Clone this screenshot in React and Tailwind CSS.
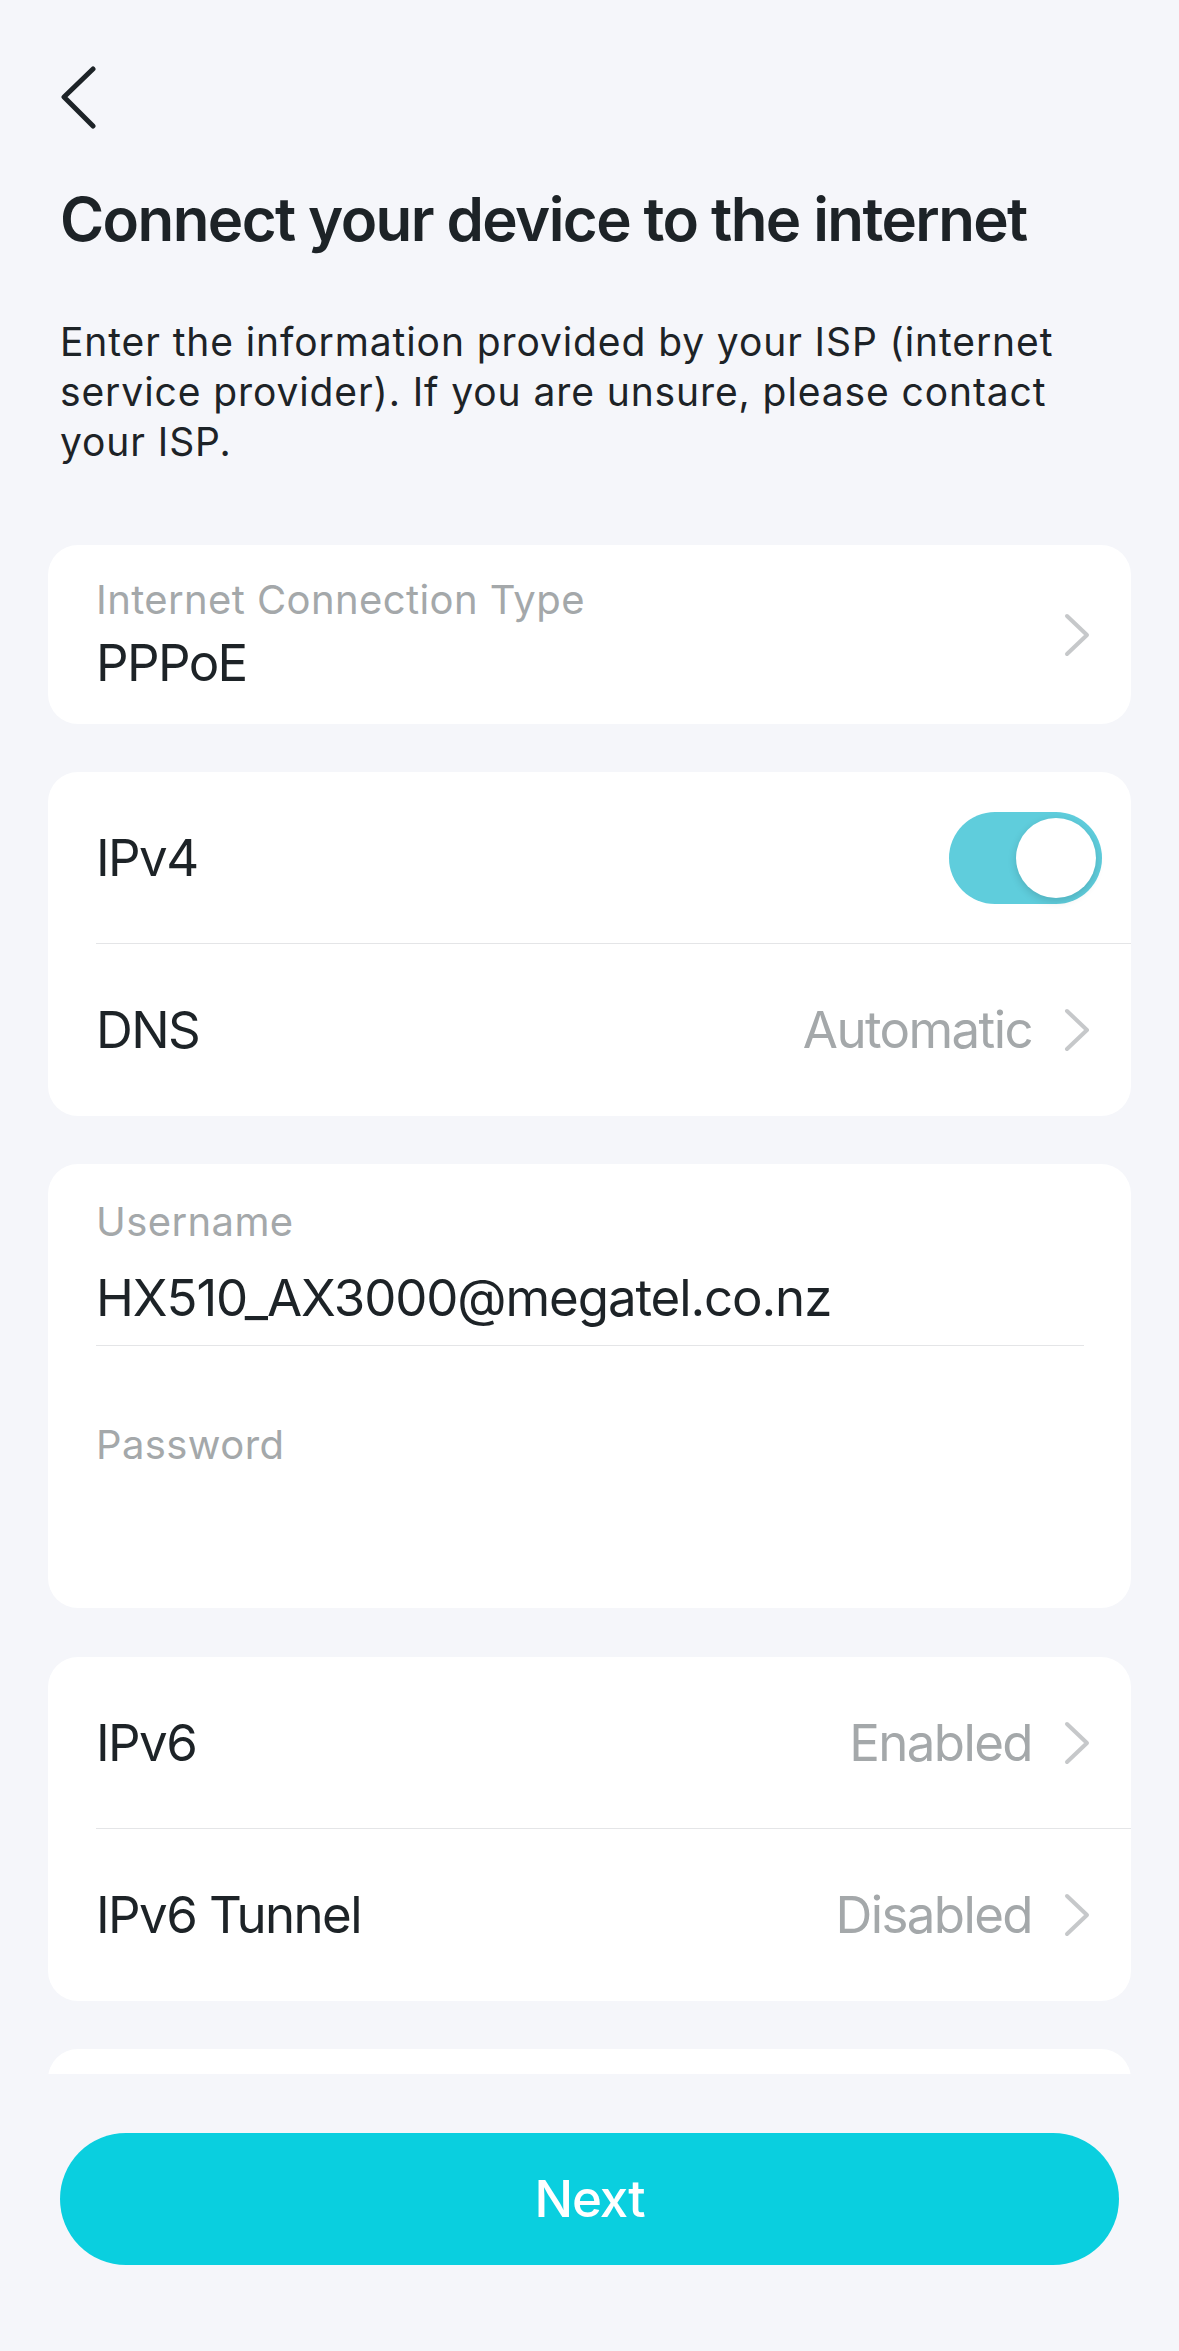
import React, { useState } from "react";

const font = { fontFamily: "Inter, 'Noto Sans', sans-serif" };

const Chevron = () => (
  <svg width="28" height="44" viewBox="0 0 28 44" fill="none" className="shrink-0">
    <polyline points="4,3 24,22 4,41" stroke="#c6c8ca" strokeWidth="4" strokeLinecap="round" strokeLinejoin="round" />
  </svg>
);

const Card = ({ children, className = "" }) => (
  <div className={`bg-white rounded-[30px] ${className}`}>{children}</div>
);

// a row with a title on the left and a value + chevron on the right
const LinkRow = ({ title, value, height }) => (
  <div className={`flex items-center justify-between pl-[48px] pr-[40px] ${height}`}>
    <span className="text-[51px] leading-[1.2] text-[#1d2327] tracking-[-1.6px]">{title}</span>
    <div className="flex items-center gap-[31px]">
      {value && <span className="text-[51px] leading-[1.2] text-[#a4a8aa] tracking-[-1.6px]">{value}</span>}
      <Chevron />
    </div>
  </div>
);

const Divider = ({ className = "" }) => <div className={`h-px bg-[#e4e5e7] ${className}`} />;

const Toggle = ({ on, onChange }) => (
  <button
    onClick={() => onChange(!on)}
    className={`relative w-[153px] h-[92px] rounded-full transition-colors ${on ? "bg-[#5fcddc]" : "bg-[#e3e5e8]"}`}
  >
    <span
      className={`absolute top-[6px] w-[80px] h-[80px] rounded-full bg-white shadow-[0_3px_8px_rgba(0,0,0,0.15)] transition-all ${
        on ? "left-[67px]" : "left-[6px]"
      }`}
    />
  </button>
);

export default function App() {
  const [ipv4, setIpv4] = useState(true);

  return (
    <div className="w-full h-[2351px] bg-[#f5f6fa] flex flex-col overflow-hidden" style={font}>
      <div className="h-[2074px] overflow-hidden px-[48px] shrink-0">
        {/* Back */}
        <div className="mt-[66px] ml-[12px] h-[64px]">
          <svg width="40" height="64" viewBox="0 0 40 64" fill="none">
            <polyline points="33,3 4,31 33,60" stroke="#1d2327" strokeWidth="5" strokeLinecap="round" strokeLinejoin="round" />
          </svg>
        </div>

        <div className="px-[12px]">
          <h1 className="mt-[53px] text-[60px] leading-[73px] font-semibold text-[#1d2327] tracking-[-1.6px]">
            Connect your device to the internet
          </h1>
          <p className="mt-[61px] text-[39px] leading-[50px] text-[#1d2327] tracking-[0.9px]">
            Enter the information provided by your ISP (internet
            <br />
            service provider). If you are unsure, please contact
            <br />
            your ISP.
          </p>
        </div>

        {/* Connection type */}
        <Card className="mt-[78px] h-[179px] flex items-center justify-between pl-[48px] pr-[40px]">
          <div className="flex flex-col">
            <span className="text-[40px] leading-[48px] text-[#a4a8aa] tracking-[0.4px]">Internet Connection Type</span>
            <span className="mt-[8px] text-[51px] leading-[61px] text-[#1d2327] tracking-[-1.6px]">PPPoE</span>
          </div>
          <Chevron />
        </Card>

        {/* IPv4 */}
        <Card className="mt-[48px]">
          <div className="flex items-center justify-between pl-[48px] pr-[29px] h-[171px]">
            <span className="text-[51px] leading-[1.2] text-[#1d2327] tracking-[-1.6px]">IPv4</span>
            <Toggle on={ipv4} onChange={setIpv4} />
          </div>
          <Divider className="ml-[48px]" />
          <LinkRow title="DNS" value="Automatic" height="h-[172px]" />
        </Card>

        {/* Account */}
        <Card className="mt-[48px] h-[444px] pl-[48px] pr-[47px]">
          <div className="pt-[34px] flex flex-col">
            <span className="text-[40px] leading-[48px] text-[#a4a8aa] tracking-[0.4px]">Username</span>
            <span className="mt-[21px] text-[51px] leading-[61px] text-[#1d2327] tracking-[-1.1px]">
              HX510_AX3000@megatel.co.nz
            </span>
          </div>
          <Divider className="mt-[17px]" />
          <div className="pt-[75px] flex flex-col">
            <span className="text-[40px] leading-[48px] text-[#a4a8aa] tracking-[0.4px]">Password</span>
          </div>
        </Card>

        {/* IPv6 */}
        <Card className="mt-[49px]">
          <LinkRow title="IPv6" value="Enabled" height="h-[171px]" />
          <Divider className="ml-[48px]" />
          <LinkRow title="IPv6 Tunnel" value="Disabled" height="h-[172px]" />
        </Card>

        {/* next card, cut off by the scroll area */}
        <Card className="mt-[48px] h-[170px]" />
      </div>

      {/* Footer */}
      <div className="px-[60px] pt-[59px]">
        <button className="w-[1059px] h-[132px] rounded-full bg-[#0acfdf] text-white text-[51px] font-medium tracking-[-1px]">
          Next
        </button>
      </div>
    </div>
  );
}
